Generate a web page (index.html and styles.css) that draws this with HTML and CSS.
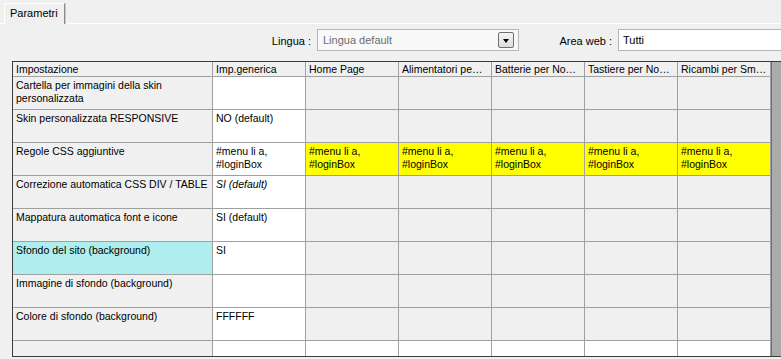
FILE: index.html
```html
<!DOCTYPE html>
<html lang="it">
<head>
    <meta charset="UTF-8">
    <title>Parametri</title>
    <link rel="stylesheet" href="styles.css">
</head>
<body>
    <div class="tabstrip">
        <div class="tab">Parametri</div>
    </div>

    <div class="panel">
        <div class="filters">
            <span class="filter-label lingua-label">Lingua :</span>
            <div class="combo">
                <span class="combo-text">Lingua default</span>
                <span class="combo-btn"><span class="arrow"></span></span>
            </div>
            <span class="filter-label area-label">Area web :</span>
            <div class="textbox">Tutti</div>
        </div>

        <div class="grid-wrap">
            <div class="grid">
                <div class="cell head">Impostazione</div>
                <div class="cell head">Imp.generica</div>
                <div class="cell head">Home Page</div>
                <div class="cell head">Alimentatori pe…</div>
                <div class="cell head">Batterie per No…</div>
                <div class="cell head">Tastiere per No…</div>
                <div class="cell head">Ricambi per Sm…</div>

                <div class="cell name">Cartella per immagini della skin<br>personalizzata</div>
                <div class="cell gen"></div>
                <div class="cell"></div><div class="cell"></div><div class="cell"></div><div class="cell"></div><div class="cell"></div>

                <div class="cell name">Skin personalizzata RESPONSIVE</div>
                <div class="cell gen">NO (default)</div>
                <div class="cell"></div><div class="cell"></div><div class="cell"></div><div class="cell"></div><div class="cell"></div>

                <div class="cell name">Regole CSS aggiuntive</div>
                <div class="cell gen">#menu li a,<br>#loginBox</div>
                <div class="cell changed">#menu li a,<br>#loginBox</div>
                <div class="cell changed">#menu li a,<br>#loginBox</div>
                <div class="cell changed">#menu li a,<br>#loginBox</div>
                <div class="cell changed">#menu li a,<br>#loginBox</div>
                <div class="cell changed">#menu li a,<br>#loginBox</div>

                <div class="cell name">Correzione automatica CSS DIV / TABLE</div>
                <div class="cell gen default">SI (default)</div>
                <div class="cell"></div><div class="cell"></div><div class="cell"></div><div class="cell"></div><div class="cell"></div>

                <div class="cell name">Mappatura automatica font e icone</div>
                <div class="cell gen">SI (default)</div>
                <div class="cell"></div><div class="cell"></div><div class="cell"></div><div class="cell"></div><div class="cell"></div>

                <div class="cell name selected">Sfondo del sito (background)</div>
                <div class="cell gen">SI</div>
                <div class="cell"></div><div class="cell"></div><div class="cell"></div><div class="cell"></div><div class="cell"></div>

                <div class="cell name">Immagine di sfondo (background)</div>
                <div class="cell gen"></div>
                <div class="cell"></div><div class="cell"></div><div class="cell"></div><div class="cell"></div><div class="cell"></div>

                <div class="cell name">Colore di sfondo (background)</div>
                <div class="cell gen">FFFFFF</div>
                <div class="cell"></div><div class="cell"></div><div class="cell"></div><div class="cell"></div><div class="cell"></div>

                <div class="cell name last"></div>
                <div class="cell gen last"></div>
                <div class="cell gen last"></div><div class="cell gen last"></div><div class="cell gen last"></div><div class="cell gen last"></div><div class="cell gen last"></div>
            </div>
        </div>
    </div>
</body>
</html>
```

FILE: styles.css
```css
body {
    margin: 0;
    width: 781px;
    height: 359px;
    overflow: hidden;
    background-color: #f0f0f0;
    font-family: 'Liberation Sans', Arial, sans-serif;
    font-size: 10.5px;
    color: #000;
}

.tabstrip {
    height: 23px;
    padding-left: 4px;
    display: flex;
    align-items: flex-end;
}

.tab {
    position: relative;
    z-index: 1;
    height: 20px;
    width: 54px;
    margin-bottom: -1px;
    padding-left: 5px;
    line-height: 19px;
    font-size: 11px;
    background-color: #f0f0f0;
    border-top: 1px solid #fff;
    border-left: 1px solid #fff;
    border-right: 1px solid #8a8a8a;
    box-shadow: 1px 0 0 #c8c8c8;
}

.panel {
    border-top: 1px solid #fff;
}

.filters {
    display: flex;
    align-items: flex-start;
    box-sizing: border-box;
    height: 37px;
    padding-top: 5px;
    font-size: 11px;
}

.filters > * {
    flex-shrink: 0;
}

.filter-label {
    text-align: right;
    margin-right: 6px;
    line-height: 24px;
}

.lingua-label {
    width: 311px;
}

.area-label {
    width: 93px;
}

.combo {
    width: 200px;
    height: 20px;
    border: 1px solid #b5b5b5;
    background-color: #f9f9f9;
    display: flex;
    align-items: center;
    justify-content: space-between;
}

.combo-text {
    color: #6d6d6d;
    padding-left: 5px;
}

.combo-btn {
    width: 14px;
    height: 14px;
    margin-right: 4px;
    border: 1px solid #707070;
    border-radius: 2px;
    background: linear-gradient(#f6f6f6, #dcdcdc);
    display: flex;
    align-items: center;
    justify-content: center;
}

.arrow {
    width: 0;
    height: 0;
    border-left: 3.5px solid transparent;
    border-right: 3.5px solid transparent;
    border-top: 4px solid #000;
    margin-top: 1px;
}

.textbox {
    width: 180px;
    height: 20px;
    line-height: 20px;
    border: 1px solid #b5b5b5;
    background-color: #fff;
    padding-left: 4px;
}

.grid-wrap {
    margin-left: 12px;
    height: 294px;
    background-color: #ababab;
    border-left: 1px solid #3c3c3c;
    border-top: 1px solid #3c3c3c;
    border-bottom: 1px solid #3c3c3c;
}

.grid {
    display: grid;
    grid-template-columns: 200px repeat(6, 93px);
    grid-template-rows: 15px repeat(8, 33px) 15px;
    width: 758px;
    height: 294px;
    border-right: 1px solid #707070;
    background-color: #f0f0f0;
}

.cell {
    box-sizing: border-box;
    border-right: 1px solid #a0a0a0;
    border-bottom: 1px solid #a0a0a0;
    background-color: #f0f0f0;
    padding: 2px 3px 0;
    line-height: 13px;
    white-space: nowrap;
    overflow: hidden;
}

.cell.head {
    padding-top: 0;
    line-height: 14px;
}

.cell.gen {
    background-color: #fff;
}

.cell.changed {
    background-color: #ffff00;
}

.cell.selected {
    background-color: #afeeee;
}

.cell.default {
    font-style: italic;
}

.cell.last {
    border-bottom: none;
}
```
